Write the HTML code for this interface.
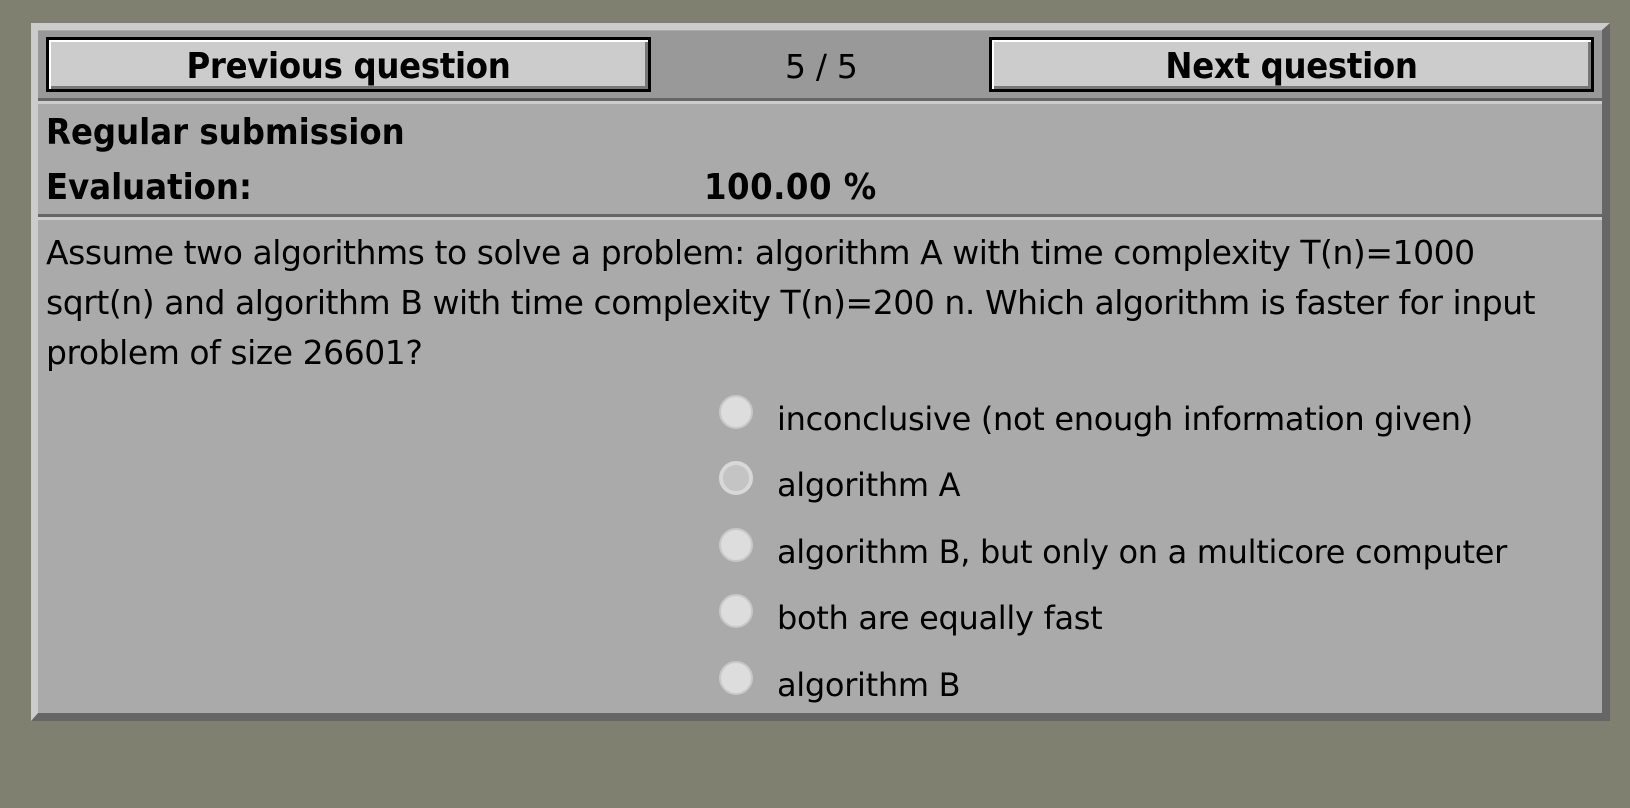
<!DOCTYPE html>
<html><head><meta charset="utf-8"><style>
*{margin:0;padding:0;box-sizing:border-box}
body{width:1630px;height:808px;background:#808070;position:relative;overflow:hidden;font-family:"DejaVu Sans","Liberation Sans",sans-serif;color:#000}
.abs{position:absolute}
#panel{left:31px;top:23px;width:1579px;height:698px;background:#aaa;border-style:solid;border-width:7px 8px 8px 7px;border-color:#ccc #666 #666 #ccc}
#nav{left:38px;top:31px;width:1564px;height:67px;background:#999}
.line{left:38px;width:1564px;height:3px}
.btn{top:37px;height:55px;border:3px solid #000;background:#ccc;box-shadow:inset 2px 2px 0 #fff,inset -3px -3px 0 #777;font-weight:bold;font-size:36px;text-align:center;line-height:54px;font-stretch:condensed;letter-spacing:-0.3px}
.t{font-size:32px;white-space:nowrap;letter-spacing:-0.3px}
.b{font-weight:bold;font-stretch:condensed;letter-spacing:0}
.r{width:34px;height:34px;border-radius:50%;background:#ddd;border:2px solid #c8c8c8;left:719px}
</style></head><body>
<div id="panel" class="abs"></div>
<div id="nav" class="abs"></div>
<div class="abs btn" style="left:46px;width:605px">Previous question</div>
<div class="abs t" style="left:785px;top:47px;font-size:33px">5 / 5</div>
<div class="abs btn" style="left:989px;width:605px">Next question</div>
<div class="abs line" style="top:98px;background:#666"></div>
<div class="abs line" style="top:101px;background:#ccc"></div>
<div class="abs t b" style="left:46px;top:112px;font-size:36px">Regular submission</div>
<div class="abs t b" style="left:46px;top:167px;font-size:36px">Evaluation:</div>
<div class="abs t b" style="left:704px;top:167px;font-size:36px;letter-spacing:0.5px">100.00 %</div>
<div class="abs line" style="top:214px;background:#666"></div>
<div class="abs line" style="top:217px;background:#ccc"></div>
<div class="abs t" style="left:46px;top:228px;line-height:50px;font-size:33px;letter-spacing:-0.45px">Assume two algorithms to solve a problem: algorithm A with time complexity T(n)=1000<br>sqrt(n) and algorithm B with time complexity T(n)=200 n. Which algorithm is faster for input<br>problem of size 26601?</div>
<div class="abs r" style="top:395px"></div>
<div class="abs r" style="top:461px;background:#c4c4c4;border:4px solid #d8d8d8"></div>
<div class="abs r" style="top:528px"></div>
<div class="abs r" style="top:594px"></div>
<div class="abs r" style="top:661px"></div>
<div class="abs t" style="left:777px;top:400px">inconclusive (not enough information given)</div>
<div class="abs t" style="left:777px;top:466px">algorithm A</div>
<div class="abs t" style="left:777px;top:533px">algorithm B, but only on a multicore computer</div>
<div class="abs t" style="left:777px;top:599px">both are equally fast</div>
<div class="abs t" style="left:777px;top:666px">algorithm B</div>
</body></html>
